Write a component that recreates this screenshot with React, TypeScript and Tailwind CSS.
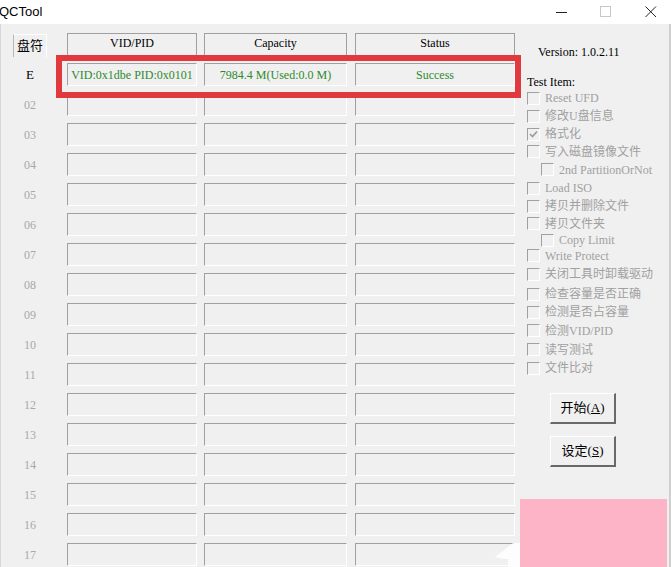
import React from 'react';

const serif = "font-['Liberation_Serif','Noto_Sans_CJK_SC',serif]";

const items: { label: string; h: string; indent?: boolean; checked?: boolean }[] = [
  { label: 'Reset UFD', h: 'h-[18px]' },
  { label: '修改U盘信息', h: 'h-[18px]' },
  { label: '格式化', h: 'h-[18px]', checked: true },
  { label: '写入磁盘镜像文件', h: 'h-[17px]' },
  { label: '2nd PartitionOrNot', h: 'h-[19px]', indent: true },
  { label: 'Load ISO', h: 'h-[18px]' },
  { label: '拷贝并删除文件', h: 'h-[18px]' },
  { label: '拷贝文件夹', h: 'h-[17px]' },
  { label: 'Copy Limit', h: 'h-[16px]', indent: true },
  { label: 'Write Protect', h: 'h-[15px]' },
  { label: '关闭工具时卸载驱动', h: 'h-[22px]' },
  { label: '检查容量是否正确', h: 'h-[18px]' },
  { label: '检测是否占容量', h: 'h-[18px]' },
  { label: '检测VID/PID', h: 'h-[19px]' },
  { label: '读写测试', h: 'h-[19px]' },
  { label: '文件比对', h: 'h-[18px]' },
];

const Cell = ({ w, ml, children }: { w: string; ml: string; children?: React.ReactNode }) => (
  <div
    className={`${w} ${ml} h-[23px] border-t border-l border-[#a0a0a0] border-r border-r-white border-b border-b-white flex items-center justify-center text-[12px] text-[#2e8a2e]`}
  >
    {children}
  </div>
);

const CheckBox = ({ checked }: { checked?: boolean }) => (
  <div className="w-[13px] h-[13px] border-t border-l border-[#a0a0a0] border-r border-r-white border-b border-b-white bg-[#f0f0f0] flex items-center justify-center shrink-0">
    {checked && (
      <svg width="9" height="9" viewBox="0 0 9 9">
        <path d="M1 4 L3.5 6.5 L8 1.5" stroke="#9a9a9a" strokeWidth="1.6" fill="none" />
      </svg>
    )}
  </div>
);

export default function App() {
  const rows = Array.from({ length: 16 }, (_, i) => String(i + 2).padStart(2, '0'));

  return (
    <div className={`relative w-[671px] h-[567px] overflow-hidden bg-white ${serif}`}>
      {/* Title bar */}
      <div className="h-[24px] bg-white flex items-center justify-between">
        <span className="-ml-[1px] text-[13px] text-black font-['Liberation_Sans',sans-serif]">QCTool</span>
        <div className="flex items-center h-full pr-[14px]">
          <svg width="12" height="12" viewBox="0 0 12 12" className="mr-[32px]">
            <line x1="0" y1="6.5" x2="11" y2="6.5" stroke="#222" strokeWidth="1" />
          </svg>
          <svg width="12" height="12" viewBox="0 0 12 12" className="mr-[33px]">
            <rect x="0.5" y="0.5" width="10" height="10" stroke="#c8c8c8" fill="none" />
          </svg>
          <svg width="12" height="12" viewBox="0 0 12 12">
            <path d="M0.5 0.5 L11 11 M11 0.5 L0.5 11" stroke="#222" strokeWidth="1" />
          </svg>
        </div>
      </div>

      {/* Body */}
      <div className="h-[543px] bg-[#f0f0f0] border-l border-[#d8d8d8] border-r-2 border-r-[#d0d0d0] flex">
        {/* Table */}
        <div className="w-[515px] pt-[9px] -ml-[1px]">
          <div className="flex items-start h-[22px]">
            <div className="w-[60px] flex justify-center pt-[1px]">
              <div className="w-[34px] h-[23px] border-t border-t-white border-l border-l-[#b8b8b8] border-r border-r-white flex items-center justify-center text-[13px] text-black">
                盘符
              </div>
            </div>
            {[
              { t: 'VID/PID', w: 'w-[130px]', ml: 'ml-[7px]' },
              { t: 'Capacity', w: 'w-[143px]', ml: 'ml-[7px]' },
              { t: 'Status', w: 'w-[160px]', ml: 'ml-[8px]' },
            ].map((h) => (
              <div
                key={h.t}
                className={`${h.w} ${h.ml} h-[22px] border-t border-l border-r border-[#a0a0a0] flex items-center justify-center text-[12px] text-black pb-[4px]`}
              >
                {h.t}
              </div>
            ))}
          </div>

          <div className="mt-[8px] flex flex-col gap-[7px]">
            <div className="flex items-center">
              <div className="w-[60px] text-center text-[13px] text-black">E</div>
              <Cell w="w-[130px]" ml="ml-[7px]">VID:0x1dbe PID:0x0101</Cell>
              <Cell w="w-[143px]" ml="ml-[7px]">7984.4 M(Used:0.0 M)</Cell>
              <Cell w="w-[160px]" ml="ml-[8px]">Success</Cell>
            </div>
            {rows.map((r) => (
              <div key={r} className="flex items-center">
                <div className="w-[60px] text-center text-[12px] text-[#a8a8a8]">{r}</div>
                <Cell w="w-[130px]" ml="ml-[7px]" />
                <Cell w="w-[143px]" ml="ml-[7px]" />
                <Cell w="w-[160px]" ml="ml-[8px]" />
              </div>
            ))}
          </div>
        </div>

        {/* Right panel */}
        <div className="ml-[12px] flex flex-col pt-[20px]">
          <div className="ml-[11px] h-[16px] leading-[16px] text-[12px] text-black">Version: 1.0.2.11</div>
          <div className="mt-[14px] h-[16px] leading-[16px] text-[12px] text-black">Test Item:</div>
          <div className="flex flex-col mt-[-1px]">
            {items.map((it) => (
              <div
                key={it.label}
                className={`${it.h} flex items-center ${it.indent ? 'pl-[14px]' : ''}`}
              >
                <CheckBox checked={it.checked} />
                <span className="ml-[5px] text-[12px] text-[#a0a0a0] whitespace-nowrap leading-none">{it.label}</span>
              </div>
            ))}
          </div>
          <div className="ml-[23px] mt-[16px] flex flex-col gap-[12px]">
            {[
              { t: '开始', k: 'A' },
              { t: '设定', k: 'S' },
            ].map((b) => (
              <div
                key={b.k}
                className="w-[66px] h-[31px] border-t border-l border-white border-r-2 border-b-2 border-r-[#696969] border-b-[#696969] bg-[#f0f0f0] flex items-center justify-center text-[13px] text-black"
              >
                {b.t}(<span className="underline">{b.k}</span>)
              </div>
            ))}
          </div>
        </div>
      </div>

      {/* Highlight frame */}
      <div className="absolute left-[56px] top-[55px] w-[465px] h-[43px] border-[6px] border-[#e03a3e]" />

      {/* Watermark */}
      <svg className="absolute left-[495px] top-[540px]" width="26" height="27" viewBox="0 0 26 27">
        <path d="M0 17 L18 3 L25 3 L25 27 L13 27 L13 19 L8 19 Z" fill="#ffffff" opacity="0.85" />
      </svg>
      <div className="absolute left-[520px] top-[499px] w-[147px] h-[68px] bg-[#feb4c7]" />
    </div>
  );
}
